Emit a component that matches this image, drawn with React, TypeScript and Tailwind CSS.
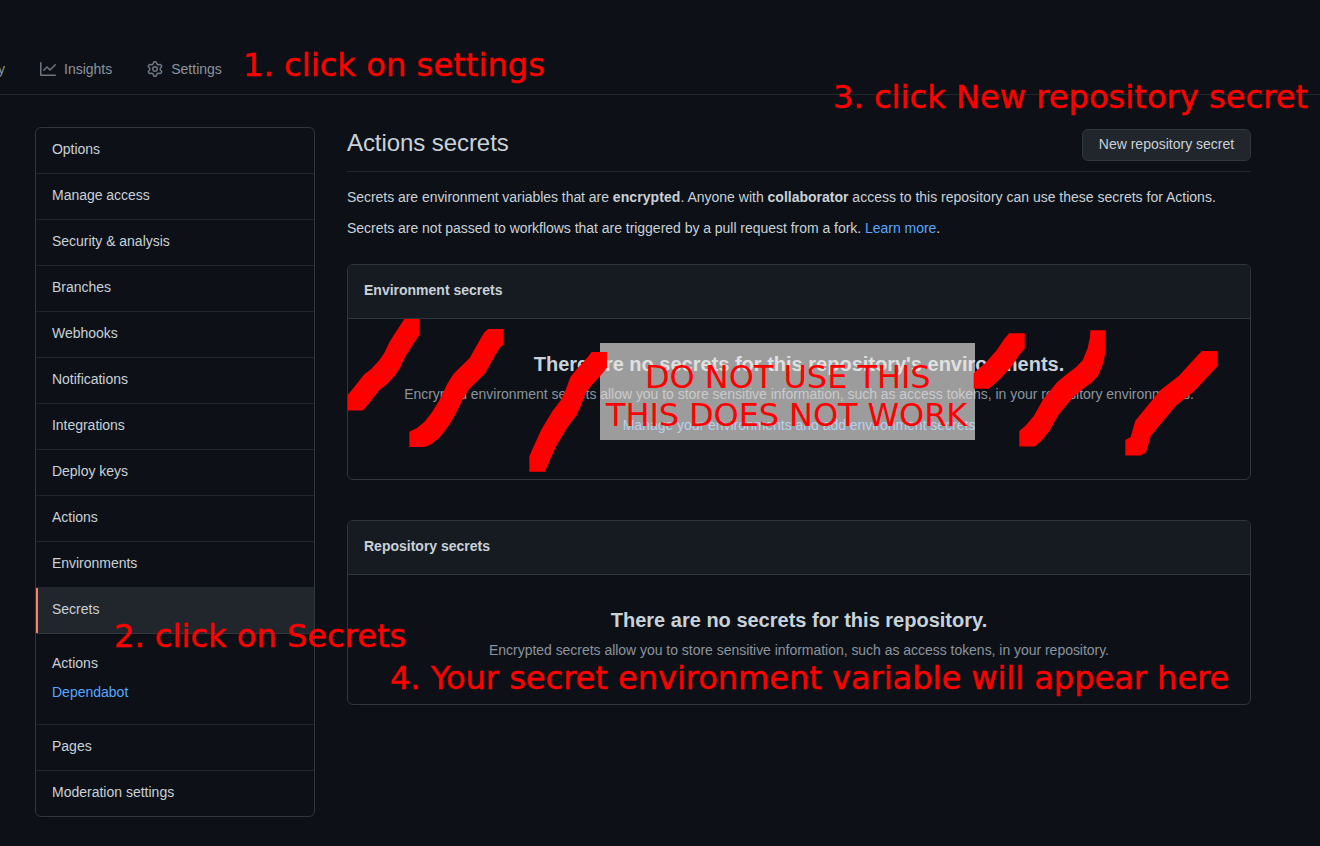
import React from "react";

const topItems = [
  "Options",
  "Manage access",
  "Security & analysis",
  "Branches",
  "Webhooks",
  "Notifications",
  "Integrations",
  "Deploy keys",
  "Actions",
  "Environments",
];

function GraphIcon() {
  return (
    <svg width="16" height="16" viewBox="0 0 16 16" fill="#6e7681">
      <path
        fillRule="evenodd"
        d="M1.5 1.75a.75.75 0 00-1.5 0v12.5c0 .414.336.75.75.75h14.5a.75.75 0 000-1.5H1.5V1.75zm14.28 2.53a.75.75 0 00-1.06-1.06L10 7.94 7.53 5.47a.75.75 0 00-1.06 0L3.22 8.72a.75.75 0 001.06 1.06L7 7.06l2.47 2.47a.75.75 0 001.06 0l5.25-5.25z"
      />
    </svg>
  );
}

function GearIcon() {
  return (
    <svg width="16" height="16" viewBox="0 0 16 16" fill="#6e7681">
      <path
        fillRule="evenodd"
        d="M7.429 1.525a6.593 6.593 0 011.142 0c.036.003.108.036.137.146l.289 1.105c.147.56.55.967.997 1.189.174.086.341.183.501.29.417.278.97.423 1.53.27l1.102-.303c.11-.03.175.016.195.046.219.31.41.641.573.989.014.031.022.11-.059.19l-.815.806c-.411.406-.562.957-.53 1.456a4.588 4.588 0 010 .582c-.032.499.119 1.05.53 1.456l.815.806c.08.08.073.159.059.19a6.494 6.494 0 01-.573.99c-.02.029-.086.074-.195.045l-1.103-.303c-.559-.153-1.112-.008-1.529.27-.16.107-.327.204-.5.29-.449.222-.851.628-.998 1.189l-.289 1.105c-.029.11-.101.143-.137.146a6.613 6.613 0 01-1.142 0c-.036-.003-.108-.037-.137-.146l-.289-1.105c-.147-.56-.55-.967-.997-1.189a4.502 4.502 0 01-.501-.29c-.417-.278-.97-.423-1.53-.27l-1.102.303c-.11.03-.175-.016-.195-.046a6.492 6.492 0 01-.573-.989c-.014-.031-.022-.11.059-.19l.815-.806c.411-.406.562-.957.53-1.456a4.587 4.587 0 010-.582c.032-.499-.119-1.05-.53-1.456l-.815-.806c-.08-.08-.073-.159-.059-.19a6.44 6.44 0 01.573-.99c.02-.029.086-.075.195-.045l1.103.303c.559.153 1.112.008 1.529-.27.16-.107.327-.204.5-.29.449-.222.851-.628.998-1.189l.289-1.105c.029-.11.101-.143.137-.146zM8 0c-.236 0-.47.01-.701.03-.743.065-1.29.615-1.458 1.261l-.29 1.106c-.017.066-.078.158-.211.224a5.994 5.994 0 00-.668.386c-.123.082-.233.09-.3.071L3.27 2.776c-.644-.177-1.392.02-1.82.63a7.977 7.977 0 00-.704 1.217c-.315.675-.111 1.422.363 1.891l.815.806c.05.048.098.147.088.294a6.084 6.084 0 000 .772c.01.147-.038.246-.088.294l-.815.806c-.474.469-.678 1.216-.363 1.891.2.428.436.835.704 1.218.428.609 1.176.806 1.82.63l1.103-.303c.066-.019.176-.011.299.071.213.143.436.272.668.386.133.066.194.158.212.224l.289 1.106c.169.646.715 1.196 1.458 1.26a8.094 8.094 0 001.402 0c.743-.064 1.29-.614 1.458-1.26l.29-1.106c.017-.066.078-.158.211-.224a5.98 5.98 0 00.668-.386c.123-.082.233-.09.3-.071l1.102.302c.644.177 1.392-.02 1.82-.63.268-.382.505-.789.704-1.217.315-.675.111-1.422-.364-1.891l-.814-.806c-.05-.048-.098-.147-.088-.294a6.1 6.1 0 000-.772c-.01-.147.039-.246.088-.294l.814-.806c.475-.469.679-1.216.364-1.891a7.992 7.992 0 00-.704-1.218c-.428-.609-1.176-.806-1.82-.63l-1.103.303c-.066.019-.176.011-.299-.071a5.991 5.991 0 00-.668-.386c-.133-.066-.194-.158-.212-.224L10.16 1.29C9.99.645 9.444.095 8.701.031A8.094 8.094 0 008 0zm1.5 8a1.5 1.5 0 11-3 0 1.5 1.5 0 013 0zM11 8a3 3 0 11-6 0 3 3 0 016 0z"
      />
    </svg>
  );
}

function TopNav() {
  return (
    <nav className="flex h-[95px] items-end border-b border-[#21262d] pb-[15px] text-[#8b949e]">
      <div className="flex h-5 w-[5px] shrink-0 justify-end whitespace-nowrap">Security</div>
      <div className="ml-[35px] flex h-5 items-center gap-2">
        <GraphIcon />
        <span>Insights</span>
      </div>
      <div className="ml-[35px] flex h-5 items-center gap-2">
        <GearIcon />
        <span>Settings</span>
      </div>
    </nav>
  );
}

function Sidebar() {
  return (
    <aside className="h-[690px] w-[280px] shrink-0 overflow-hidden rounded-md border border-[#30363d]">
      {topItems.map((label) => (
        <div key={label} className="h-[46px] border-b border-[#21262d] px-4 pt-[11px] tracking-[-0.03px]">
          {label}
        </div>
      ))}
      <div className="-mt-px h-[47px] border-y border-b-[#30363d] border-t-[#21262d] bg-[#21262d]">
        <div className="h-full border-l-2 border-[#f78166] pl-[14px] pt-[11px]">Secrets</div>
      </div>
      <div className="flex h-[91px] flex-col gap-[9px] border-b border-[#21262d] px-4 pt-[19px]">
        <span>Actions</span>
        <span className="text-[#58a6ff]">Dependabot</span>
      </div>
      <div className="h-[46px] border-b border-[#21262d] px-4 pt-[11px]">Pages</div>
      <div className="px-4 pt-[11px]">Moderation settings</div>
    </aside>
  );
}

function Card({ title, className, children }: { title: string; className: string; children: React.ReactNode }) {
  return (
    <section className={"overflow-hidden rounded-md border border-[#30363d] " + className}>
      <h3 className="h-[54px] border-b border-[#30363d] bg-[#161b22] px-4 pt-[15px] font-bold">{title}</h3>
      <div className="flex flex-col items-center whitespace-nowrap pt-[30px]">{children}</div>
    </section>
  );
}

function Note({ className, children }: { className: string; children: React.ReactNode }) {
  return (
    <div
      className={
        "absolute whitespace-nowrap font-['DejaVu_Sans',sans-serif] text-[32px] leading-[38px] text-[#ff0000] " +
        className
      }
    >
      {children}
    </div>
  );
}

type Point = [number, number];

const BRUSH = 15.4;

/* Top-left corners of the square brush along each stroke, in thirds of a pixel from the group's origin. */
const strokes: { origin: Point; path: Point[] }[] = [
  {
    origin: [345, 315],
    path: [[178, 12], [157, 44], [134, 80], [118, 114], [103, 136], [78, 163], [58, 178], [20, 226], [8, 240]],
  },
  {
    origin: [345, 315],
    path: [[430, 42], [418, 52], [398, 86], [374, 129], [326, 176], [308, 205], [284, 254], [262, 290], [239, 320], [215, 340], [193, 350]],
  },
  {
    origin: [525, 345],
    path: [[200, 21], [188, 37], [155, 73], [136, 97], [122, 135], [108, 165], [82, 199], [48, 256], [29, 298], [13, 334]],
  },
  {
    origin: [970, 325],
    path: [[118, 25], [105, 39], [80, 76], [47, 113], [11, 145]],
  },
  {
    origin: [970, 325],
    path: [[361, 16], [360, 36], [353, 70], [338, 106], [318, 127], [292, 146], [262, 171], [220, 222], [192, 272], [165, 304], [148, 318]],
  },
  {
    origin: [970, 325],
    path: [[696, 78], [684, 90], [627, 152], [572, 195], [537, 237], [496, 287], [482, 336], [466, 345]],
  },
];

/* Area swept by the brush along a path that runs down and to the left. */
function sweep(origin: Point, path: Point[]) {
  const at = path.map(([x, y]): Point => [origin[0] + x / 3, origin[1] + y / 3]);
  return at
    .slice(1)
    .map(([bx, by], i) => {
      const [ax, ay] = at[i];
      const s = BRUSH;
      return `M${ax} ${ay}H${ax + s}V${ay + s}L${bx + s} ${by + s}H${bx}V${by}Z`;
    })
    .join("");
}

function Scribbles() {
  return (
    <svg className="absolute left-0 top-0" width="1320" height="846" fill="#ff0000">
      {strokes.map(({ origin, path }, i) => (
        <path key={i} d={sweep(origin, path)} />
      ))}
    </svg>
  );
}

export default function App() {
  return (
    <div className="relative h-[846px] w-[1320px] overflow-hidden bg-[#0d1117] font-['Liberation_Sans',Arial,sans-serif] text-[14px] leading-5 text-[#c9d1d9]">
      <TopNav />
      <div className="flex gap-8 pl-[35px] pt-8">
        <Sidebar />
        <main className="w-[904px]">
          <header className="flex h-[45px] items-start justify-between border-b border-[#21262d]">
            <h2 className="text-[24px] leading-8 tracking-[-0.07px]">Actions secrets</h2>
            <button className="mt-0.5 h-8 w-[169px] rounded-md border border-[#30363d] bg-[#21262d] pb-0.5">
              New repository secret
            </button>
          </header>
          <p className="mt-[15px] whitespace-nowrap">
            <span className="tracking-[-0.045px]">Secrets are environment variables that are </span>
            <b className="tracking-[0.08px]">encrypted</b>. Anyone with <b>collaborator</b> access to this repository
            can use these secrets for Actions.
          </p>
          <p className="mt-[11px] whitespace-nowrap tracking-[-0.03px]">
            Secrets are not passed to workflows that are triggered by a pull request from a fork.{" "}
            <span className="text-[#58a6ff]">Learn more</span>.
          </p>
          <Card title="Environment secrets" className="mt-[26px] h-[216px]">
            <h4 className="text-[20px] font-bold leading-[30px]">
              There are no secrets for this repository's environments.
            </h4>
            <p className="mt-[5px] tracking-[-0.025px] text-[#8b949e]">
              Encrypted environment secrets allow you to store sensitive information, such as access tokens, in your
              repository environments.
            </p>
            <p className="mt-[11px] tracking-[-0.03px] text-[#58a6ff]">
              Manage your environments and add environment secrets
            </p>
          </Card>
          <Card title="Repository secrets" className="mt-10 h-[185px]">
            <h4 className="text-[20px] font-bold leading-[30px]">There are no secrets for this repository.</h4>
            <p className="mt-[5px] tracking-[-0.03px] text-[#8b949e]">
              Encrypted secrets allow you to store sensitive information, such as access tokens, in your repository.
            </p>
          </Card>
        </main>
      </div>

      <div className="absolute left-[600px] top-[343px] h-[97px] w-[375px] bg-[rgba(235,232,229,0.65)]" />
      <Scribbles />
      <Note className="left-[243px] top-[46px] tracking-[0.1px] [-webkit-text-stroke:0.4px_#ff0000]">
        1. click on settings
      </Note>
      <Note className="left-[833px] top-[78px] tracking-[0.07px] [-webkit-text-stroke:0.4px_#ff0000]">
        3. click New repository secret
      </Note>
      <Note className="left-[114px] top-[617px] tracking-[0.05px] [-webkit-text-stroke:0.4px_#ff0000]">
        2. click on Secrets
      </Note>
      <Note className="left-[390px] top-[659px] [-webkit-text-stroke:0.4px_#ff0000]">
        4. Your secret environment variable will appear here
      </Note>
      <Note className="left-[645px] top-[358px] tracking-[-0.05px]">DO NOT USE THIS</Note>
      <Note className="left-[606px] top-[396px] tracking-[-0.1px]">THIS DOES NOT WORK</Note>
    </div>
  );
}
